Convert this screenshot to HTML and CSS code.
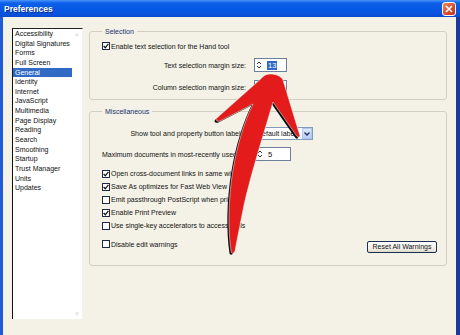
FILE: index.html
```html
<!DOCTYPE html>
<html lang="en">
<head>
  <meta charset="UTF-8" />
  <title>Preferences</title>
  <link rel="stylesheet" href="styles.css">
</head>
<body>
  <div class="window">
    <div class="titlebar">
      <span class="title">Preferences</span>
      <span class="close">
        <svg width="8" height="8" viewBox="0 0 8 8"><path d="M1 1 L7 7 M7 1 L1 7" stroke="#fff" stroke-width="1.6"/></svg>
      </span>
    </div>

    <div class="client">
      <div class="categories">
        <ul class="cat-list">
          <li>Accessibility</li>
          <li>Digital Signatures</li>
          <li>Forms</li>
          <li>Full Screen</li>
          <li class="selected">General</li>
          <li>Identity</li>
          <li>Internet</li>
          <li>JavaScript</li>
          <li>Multimedia</li>
          <li>Page Display</li>
          <li>Reading</li>
          <li>Search</li>
          <li>Smoothing</li>
          <li>Startup</li>
          <li>Trust Manager</li>
          <li>Units</li>
          <li>Updates</li>
        </ul>
        <div class="scroll">
          <span>&#9650;</span>
          <span>&#9660;</span>
        </div>
      </div>

      <div class="pane">
        <fieldset class="group group-selection">
          <legend>Selection</legend>
          <div class="check row-10">
            <span class="box checked"><svg width="6" height="6" viewBox="0 0 6 6"><path d="M0.6 3 L2.3 4.8 L5.4 0.8" fill="none" stroke="#1a1a1a" stroke-width="1.3"/></svg></span>
            Enable text selection for the Hand tool
          </div>
          <div class="field field-first">
            <span class="field-label">Text selection margin size:</span>
            <span class="spin">
              <svg class="spin-arrows" width="6" height="10" viewBox="0 0 6 10"><path d="M1 4 L3 2 L5 4 M1 6 L3 8 L5 6" fill="none" stroke="#333" stroke-width="1"/></svg>
              <span class="value"><span class="hilite">13</span></span>
            </span>
          </div>
          <div class="field field-second">
            <span class="field-label">Column selection margin size:</span>
            <span class="spin">
              <svg class="spin-arrows" width="6" height="10" viewBox="0 0 6 10"><path d="M1 4 L3 2 L5 4 M1 6 L3 8 L5 6" fill="none" stroke="#333" stroke-width="1"/></svg>
              <span class="value">2</span>
            </span>
          </div>
        </fieldset>

        <fieldset class="group group-misc">
          <legend>Miscellaneous</legend>
          <div class="field field-select">
            <span class="field-label">Show tool and property button labels:</span>
            <span class="dropdown">
              <span class="dropdown-text">Default labels</span>
              <span class="dropdown-btn"><svg width="6" height="4" viewBox="0 0 6 4"><path d="M0.5 0.5 L3 3 L5.5 0.5" fill="none" stroke="#1c2c5c" stroke-width="1.3"/></svg></span>
            </span>
          </div>
          <div class="field field-docs">
            <span class="field-label left">Maximum documents in most-recently used list:</span>
            <span class="spin spin-wide">
              <svg class="spin-arrows" width="6" height="10" viewBox="0 0 6 10"><path d="M1 4 L3 2 L5 4 M1 6 L3 8 L5 6" fill="none" stroke="#333" stroke-width="1"/></svg>
              <span class="value">5</span>
            </span>
          </div>

          <div class="checks">
            <div class="check row-13">
              <span class="box checked"><svg width="6" height="6" viewBox="0 0 6 6"><path d="M0.6 3 L2.3 4.8 L5.4 0.8" fill="none" stroke="#1a1a1a" stroke-width="1.3"/></svg></span>
              Open cross-document links in same window
            </div>
            <div class="check row-13">
              <span class="box checked"><svg width="6" height="6" viewBox="0 0 6 6"><path d="M0.6 3 L2.3 4.8 L5.4 0.8" fill="none" stroke="#1a1a1a" stroke-width="1.3"/></svg></span>
              Save As optimizes for Fast Web View
            </div>
            <div class="check row-13">
              <span class="box"></span>
              Emit passthrough PostScript when printing
            </div>
            <div class="check row-13">
              <span class="box checked"><svg width="6" height="6" viewBox="0 0 6 6"><path d="M0.6 3 L2.3 4.8 L5.4 0.8" fill="none" stroke="#1a1a1a" stroke-width="1.3"/></svg></span>
              Enable Print Preview
            </div>
            <div class="check row-13">
              <span class="box"></span>
              Use single-key accelerators to access tools
            </div>
          </div>

          <div class="last-row">
            <div class="check row-12">
              <span class="box"></span>
              Disable edit warnings
            </div>
            <button class="btn reset-btn">Reset All Warnings</button>
          </div>
        </fieldset>

        <!-- dialog buttons, only their top edges show in the frame -->
        <div class="footer">
          <button class="btn footer-btn"></button>
          <button class="btn footer-btn"></button>
        </div>
      </div>
    </div>

    <svg class="arrow" width="460" height="335" viewBox="0 0 460 335">
      <path transform="translate(-1.6 1.6)" fill="#0c0c0c" d="M270 74 C276 74 281 76 283 80 L300 136 C299 138 297 137 296 135 L273 102 C265 130 252 170 244 205 C240 225 237 240 235 251 C234 254 231 254 231 251 C228 230 228 200 233 170 C237 145 245 120 253 104 L220 121 C217 122 215 120 217 118 L262 78 C264 75 267 74 270 74 Z"/>
      <path fill="#e31b1b" stroke="#ffffff" stroke-width="0.5" d="M270 74 C276 74 281 76 283 80 L300 136 C299 138 297 137 296 135 L273 102 C265 130 252 170 244 205 C240 225 237 240 235 251 C234 254 231 254 231 251 C228 230 228 200 233 170 C237 145 245 120 253 104 L220 121 C217 122 215 120 217 118 L262 78 C264 75 267 74 270 74 Z"/>
    </svg>
  </div>
</body>
</html>
```

FILE: styles.css
```css
* {
  margin: 0;
  padding: 0;
  box-sizing: border-box;
}

body {
  width: 460px;
  height: 335px;
  overflow: hidden;
  font-family: "Liberation Sans", Arial, sans-serif;
  font-size: 7px;
  color: #111;
  background: #f4f1e6;
}

.window {
  position: relative;
  height: 335px;
  display: flex;
  flex-direction: column;
}

/* title bar */

.titlebar {
  height: 17px;
  flex: none;
  display: flex;
  align-items: center;
  justify-content: space-between;
  padding: 0 4px;
  background: linear-gradient(180deg, #4a95fa 0, #0d60ea 3px, #0758e4 9px, #0a53dc 14px, #0949cc 17px);
}

.title {
  color: #fff;
  font-weight: bold;
  font-size: 8.5px;
  text-shadow: 1px 1px 0 #0a2a8a;
}

.close {
  width: 14px;
  height: 14px;
  border: 1px solid #fff;
  border-radius: 3px;
  background: linear-gradient(135deg, #f08a6a, #d6482a 60%, #c2361c);
  display: flex;
  align-items: center;
  justify-content: center;
}

/* client area */

.client {
  flex: 1;
  display: flex;
  border-left: 3px solid #1f5bd6;
  border-right: 4px solid #1c3a9c;
  background: #f4f1e6;
}

.categories {
  width: 71px;
  height: 291px;
  margin: 11px 0 0 9px;
  display: flex;
  background: #fff;
  border-left: 1px solid #111;
  border-top: 1px solid #222;
  border-right: 1px solid #f2f2ee;
}

.cat-list {
  list-style: none;
  width: 60px;
}

.cat-list li {
  height: 9.65px;
  line-height: 9.65px;
  padding-left: 2px;
  white-space: nowrap;
}

.cat-list li.selected {
  background: #316ac5;
  color: #fff;
}

.scroll {
  width: 10px;
  display: flex;
  flex-direction: column;
  justify-content: space-between;
  align-items: center;
  padding: 2px 0 2px;
  color: #e2e2dc;
  font-size: 6px;
}

/* right pane */

.pane {
  width: 358px;
  margin-left: 6px;
  display: flex;
  flex-direction: column;
}

.group {
  min-width: 0;
  border: 1px solid #d3cfc0;
  border-radius: 3px;
  padding: 4px 9px 5px 12px;
}

.group legend {
  padding: 0 3px;
  line-height: 11px;
  color: #203070;
}

.group-selection {
  margin-top: 9px;
}

.group-misc {
  margin-top: 6px;
  padding-bottom: 12px;
}

.check {
  display: flex;
  align-items: center;
  white-space: nowrap;
}

.row-10 { height: 10px; }
.row-12 { height: 12px; }
.row-13 { height: 13px; }

.box {
  width: 8px;
  height: 8px;
  margin-right: 1px;
  border: 1px solid #1f2a44;
  background: #fff;
  display: flex;
  align-items: center;
  justify-content: center;
  flex: none;
}

.field {
  display: flex;
  align-items: center;
}

.field-first { height: 14px; margin-top: 7px; }
.field-second { height: 14px; margin-top: 8px; }
.field-select { height: 13px; margin-top: 6px; }
.field-docs { height: 14px; margin-top: 7px; }

.field-label {
  width: 144px;
  flex: none;
  text-align: right;
  white-space: nowrap;
}

.field-label.left {
  text-align: left;
}

.spin {
  width: 33px;
  height: 14px;
  margin-left: 8px;
  border: 1px solid #6d7f9a;
  background: #fff;
  display: flex;
  align-items: center;
  padding-left: 1px;
}

.spin-wide {
  width: 36px;
  margin-left: 9px;
}

.spin .value {
  margin-left: 5px;
  font-size: 7.5px;
}

.hilite {
  background: #316ac5;
  color: #fff;
  padding: 0 1px;
}

.dropdown {
  width: 60px;
  height: 13px;
  margin-left: 7px;
  border: 1px solid #7f9db9;
  background: #fff;
  display: flex;
  align-items: center;
}

.dropdown-text {
  flex: 1;
  padding-left: 3px;
  white-space: nowrap;
  overflow: hidden;
}

.dropdown-btn {
  width: 10px;
  height: 11px;
  background: linear-gradient(180deg, #dfe8fd, #b9cdf6);
  border: 1px solid #b3c6ee;
  display: flex;
  align-items: center;
  justify-content: center;
}

.checks {
  margin-top: 6px;
}

.last-row {
  margin-top: 6px;
  display: flex;
  justify-content: space-between;
  align-items: flex-start;
}

.btn {
  font-family: "Liberation Sans", Arial, sans-serif;
  font-size: 7px;
  color: #111;
  border: 1px solid #1a2f52;
  border-radius: 2px;
  background: linear-gradient(180deg, #ffffff, #f1efe6 70%, #dcd8c8);
}

.reset-btn {
  width: 70px;
  height: 12px;
  margin-top: 3px;
  line-height: 10px;
}

.footer {
  margin-top: 71px;
  display: flex;
  justify-content: flex-end;
  gap: 8px;
}

.footer-btn {
  width: 46px;
  height: 20px;
}

/* red arrow drawn over the dialog */

.arrow {
  position: absolute;
  left: 0;
  top: 0;
  pointer-events: none;
}
```
